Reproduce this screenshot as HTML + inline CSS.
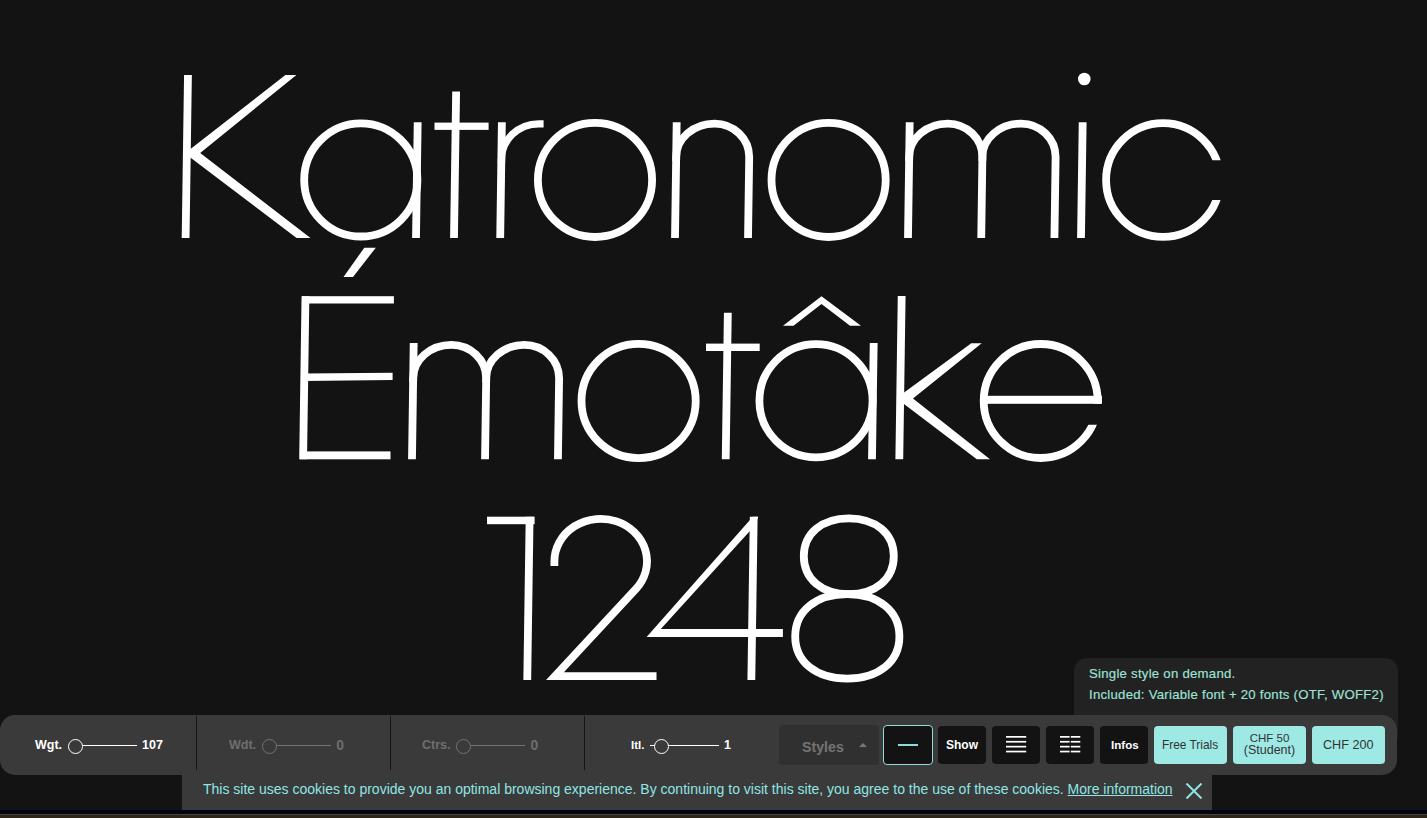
<!DOCTYPE html>
<html><head><meta charset="utf-8"><title>Katronomic</title>
<style>
html,body{margin:0;padding:0;}
body{width:1427px;height:818px;overflow:hidden;background:#131313;position:relative;font-family:"Liberation Sans",sans-serif;}
.big{position:absolute;left:0;top:0;}
.bar{position:absolute;left:0;top:715px;width:1397px;height:60px;background:#3a3a3a;border-radius:15px;}
.div{position:absolute;top:716px;width:1px;height:54px;background:#151515;}
.lbl{position:absolute;top:736.5px;font-size:12.5px;font-weight:bold;line-height:16px;white-space:nowrap;}
.val{position:absolute;top:736.5px;font-size:12.5px;font-weight:bold;line-height:16px;white-space:nowrap;}
.on{color:#fff;}
.off{color:#6e6e6e;}
.knob{position:absolute;top:738.6px;width:13px;height:13px;border-radius:50%;border:1.5px solid;box-sizing:content-box;}
.knob.on{border-color:#fff;} .knob.off{border-color:#737373;}
.line{position:absolute;top:745px;height:1.2px;}
.line.on{background:#fff;} .line.off{background:#737373;}
.btn{position:absolute;top:726px;height:38px;border-radius:4px;background:#131313;color:#fff;box-sizing:border-box;}
.teal{background:#9ee9e4;color:#333;}
.popup{position:absolute;left:1074px;top:658px;width:324px;height:90px;background:#222;border-radius:13px;}
.ptxt{position:absolute;left:1089px;color:#9fe3d8;font-size:13.2px;letter-spacing:0.25px;-webkit-text-stroke:0.15px #9fe3d8;white-space:nowrap;line-height:16px;}
.cookie{position:absolute;left:182px;top:775px;width:1030px;height:35px;background:#3a3a3a;}
.ctxt{position:absolute;left:203px;top:781px;font-size:14px;line-height:16px;color:#8fe6e4;white-space:nowrap;}
.navy{position:absolute;left:0;top:810px;width:1427px;height:4px;background:#020614;}
.brown{position:absolute;left:0;top:814px;width:1427px;height:4px;background:#2e2619;border-top:1px solid #4b4436;box-sizing:border-box;}
</style></head><body>
<svg class="big" width="1427" height="818" viewBox="0 0 1427 818"><defs><clipPath id="cc"><path d="M1090,100 H1240 V160.3 H1160 V200.1 H1240 V260 H1090Z"/></clipPath><clipPath id="ce"><path d="M970,320 H1120 V403.8 H1040 V424.8 H1120 V480 H970Z"/></clipPath><clipPath id="c4"><path d="M600,516.7 H758.3 L756,624 H800 V700 H600Z"/></clipPath></defs><g fill="#ffffff"><polygon points="181.7,238 189.5,238 191.86,75 184.06,75"/>
<polygon points="285.4,75 296.4,75 200.2,152.9 310.5,238 296.6,238 186,154.2 186,152.5"/>
<ellipse cx="360.8" cy="179.9" rx="56.6" ry="56.6" fill="none" stroke="#ffffff" stroke-width="7.8"/>
<polygon points="412.1,238 419.9,238 421.58,122.2 413.78,122.2"/>
<polygon points="450.1,238 457.9,238 460.03,91.4 452.23,91.4"/>
<rect x="434.5" y="122.6" width="54.1" height="7.3"/>
<polygon points="496.3,238 504.1,238 505.78,122.2 497.98,122.2"/>
<path d="M501.45,163 L501.5,159.3 A37.4,35.5 0 0 1 538.9,123.8 H543.6" fill="none" stroke="#ffffff" stroke-width="7.3"/>
<ellipse cx="595" cy="179.9" rx="57.1" ry="57.1" fill="none" stroke="#ffffff" stroke-width="7.8"/>
<polygon points="671.1,238 678.9,238 680.58,122.2 672.78,122.2"/>
<path d="M676.14,161 L676.2,157 A38.4,33.4 0 0 1 714.6,123.6 A34.6,33.4 0 0 1 749.2,157 L748.03,238" fill="none" stroke="#ffffff" stroke-width="7.8"/>
<ellipse cx="828.6" cy="179.9" rx="57.1" ry="57.1" fill="none" stroke="#ffffff" stroke-width="7.8"/>
<polygon points="904.1,238 911.9,238 913.58,122.2 905.78,122.2"/>
<path d="M909.14,161 L909.2,157 A38.6,33.4 0 0 1 947.8,123.6 A34.6,33.4 0 0 1 982.4,157 L981.23,238" fill="none" stroke="#ffffff" stroke-width="7.8"/>
<path d="M982.34,161 L982.4,157 A38.8,33.4 0 0 1 1021.2,123.6 A34.4,33.4 0 0 1 1055.6,157 L1054.43,238" fill="none" stroke="#ffffff" stroke-width="7.8"/>
<polygon points="1077.1,238 1084.9,238 1086.58,122.2 1078.78,122.2"/>
<circle cx="1084.3" cy="79" r="6.3"/>
<g clip-path="url(#cc)"><ellipse cx="1163" cy="179.95" rx="56.9" ry="56.9" fill="none" stroke="#ffffff" stroke-width="7.8"/></g>
<polygon points="299.2,459.3 307,459.3 309.36,296.2 301.56,296.2"/>
<rect x="302" y="296.2" width="91.9" height="7.3"/>
<polygon points="304,373.5 392.6,372.8 392.6,380 304,381"/>
<rect x="300" y="451.4" width="90.5" height="7.9"/>
<polygon points="343.5,277 353,277 375.8,247.7 364.3,247.7"/>
<polygon points="408.1,459.3 415.9,459.3 417.59,342.9 409.79,342.9"/>
<path d="M413.14,382.3 L413.2,378.3 A38.2,33.4 0 0 1 451.4,344.9 A34.8,33.4 0 0 1 486.2,378.3 L485.03,459.3" fill="none" stroke="#ffffff" stroke-width="7.8"/>
<path d="M486.14,382.3 L486.2,378.3 A38.3,33.4 0 0 1 524.5,344.9 A34.6,33.4 0 0 1 559.1,378.3 L557.93,459.3" fill="none" stroke="#ffffff" stroke-width="7.8"/>
<ellipse cx="638.6" cy="401" rx="57.1" ry="57.1" fill="none" stroke="#ffffff" stroke-width="7.8"/>
<polygon points="721.8,459.3 729.6,459.3 731.73,312.7 723.93,312.7"/>
<rect x="706" y="343.6" width="53.7" height="7.4"/>
<ellipse cx="816" cy="400.7" rx="56.6" ry="56.6" fill="none" stroke="#ffffff" stroke-width="7.8"/>
<polygon points="868.1,459.3 875.9,459.3 877.59,342.9 869.79,342.9"/>
<polygon points="783,325.7 821.5,296.2 861,325.7 850,325.7 821.5,304 793.5,325.7"/>
<polygon points="895.4,459.3 903.2,459.3 905.57,295.9 897.77,295.9"/>
<polygon points="971.3,343.3 981.7,343.3 913,398.5 990,459.3 976.8,459.3 900,401 900,395.5"/>
<g clip-path="url(#ce)"><ellipse cx="1040.7" cy="401" rx="57" ry="57" fill="none" stroke="#ffffff" stroke-width="7.8"/></g>
<rect x="984" y="395.8" width="117.9" height="8"/>
<polygon points="523.35,680 531.15,680 533.52,516.7 525.72,516.7"/>
<rect x="487" y="516.7" width="47.6" height="7.5"/>
<path d="M554.4,566 V561 A46.3,42.5 0 1 1 636.2,588.6 L555,676.1 H656.5" fill="none" stroke="#ffffff" stroke-width="7.8" stroke-linejoin="miter" stroke-miterlimit="6"/>
<polygon points="752.8,516.7 758.4,516.7 753.5,527 660.8,628.9 782.9,628.9 782.9,637 646.6,637"/>
<polygon points="747.45,680 755.25,680 757.62,516.7 749.82,516.7"/>
<path d="M893.8,556.3 C893.8,579.04 875.8,594.2 848.8,594.2 C821.8,594.2 803.8,579.04 803.8,556.3 C803.8,533.56 821.8,518.4 848.8,518.4 C875.8,518.4 893.8,533.56 893.8,556.3 Z" fill="none" stroke="#ffffff" stroke-width="7.8"/>
<path d="M899.4,636.4 C899.4,661.72 878.56,678.6 847.3,678.6 C816.04,678.6 795.2,661.72 795.2,636.4 C795.2,611.08 816.04,594.2 847.3,594.2 C878.56,594.2 899.4,611.08 899.4,636.4 Z" fill="none" stroke="#ffffff" stroke-width="7.8"/></g></svg>
<div class="popup"></div>
<div class="ptxt" style="top:666.2px;">Single style on demand.</div>
<div class="ptxt" style="top:687.2px;">Included: Variable font + 20 fonts (OTF, WOFF2)</div>
<div class="bar"></div>
<div class="div" style="left:196px"></div>
<div class="div" style="left:390px"></div>
<div class="div" style="left:584px"></div>

<div class="lbl on" style="left:35px">Wgt.</div>
<div class="knob on" style="left:67.8px"></div>
<div class="line on" style="left:83px;width:54px"></div>
<div class="val on" style="left:142px">107</div>

<div class="lbl off" style="left:229px">Wdt.</div>
<div class="knob off" style="left:261.8px"></div>
<div class="line off" style="left:277px;width:54px"></div>
<div class="val off" style="left:336.3px;font-size:13.8px;top:737.6px">0</div>

<div class="lbl off" style="left:422px">Ctrs.</div>
<div class="knob off" style="left:455.8px"></div>
<div class="line off" style="left:471px;width:54px"></div>
<div class="val off" style="left:530.4px;font-size:13.8px;top:737.6px">0</div>

<div class="lbl on" style="left:631px;font-size:11.5px;top:737px">Itl.</div>
<div class="line on" style="left:650px;width:69px"></div>
<div class="knob on" style="left:654px;background:#3a3a3a"></div>
<div class="val on" style="left:724px">1</div>

<div class="btn" style="left:779px;top:725px;width:100px;height:40px;background:#303030;"></div>
<div style="position:absolute;left:802px;top:739px;font-size:14.2px;font-weight:bold;color:#747474;line-height:16px;">Styles</div>
<svg style="position:absolute;left:859px;top:743px" width="8" height="4"><polygon points="0,4 8,4 4,0" fill="#777"/></svg>

<div class="btn" style="left:883px;top:725px;width:50px;height:40px;border:1.5px solid #8fdcd8;background:#131313;"></div>
<div style="position:absolute;left:898px;top:744px;width:20px;height:2px;background:#8fdcd8"></div>

<div class="btn" style="left:938px;width:48px;"></div>
<div style="position:absolute;left:946px;top:737px;font-size:12px;font-weight:bold;color:#fff;line-height:16px;">Show</div>

<div class="btn" style="left:992px;width:48px;"></div>
<svg style="position:absolute;left:1006px;top:736px" width="21" height="17"><g fill="#fff"><rect x="0" y="0" width="20.2" height="1.7"/><rect x="0" y="4.9" width="20.2" height="1.7"/><rect x="0" y="9.8" width="20.2" height="1.7"/><rect x="0" y="14.7" width="20.2" height="1.7"/></g></svg>

<div class="btn" style="left:1046px;width:48px;"></div>
<svg style="position:absolute;left:1060px;top:736px" width="21" height="17"><g fill="#fff"><rect x="0" y="0" width="9.6" height="1.7"/><rect x="0" y="4.9" width="9.6" height="1.7"/><rect x="0" y="9.8" width="9.6" height="1.7"/><rect x="0" y="14.7" width="9.6" height="1.7"/><rect x="10.8" y="0" width="9.5" height="1.7"/><rect x="10.8" y="4.9" width="9.5" height="1.7"/><rect x="10.8" y="9.8" width="9.5" height="1.7"/><rect x="10.8" y="14.7" width="9.5" height="1.7"/></g></svg>

<div class="btn" style="left:1100px;width:48px;"></div>
<div style="position:absolute;left:1111px;top:737px;font-size:11.6px;font-weight:bold;color:#fff;line-height:16px;">Infos</div>

<div class="btn teal" style="left:1154px;width:73px;"></div>
<div style="position:absolute;left:1162px;top:738px;font-size:11.9px;color:#333;line-height:14px;white-space:nowrap;">Free Trials</div>

<div class="btn teal" style="left:1233px;width:73px;"></div>
<div style="position:absolute;left:1233px;width:73px;text-align:center;top:732px;font-size:11.5px;color:#333;line-height:12px;white-space:nowrap;">CHF 50<br><span style="font-size:12.5px">(Student)</span></div>

<div class="btn teal" style="left:1312px;width:73px;"></div>
<div style="position:absolute;left:1323px;top:737.5px;font-size:12.6px;color:#333;line-height:14px;white-space:nowrap;">CHF 200</div>

<div class="cookie"></div>
<div class="ctxt">This site uses cookies to provide you an optimal browsing experience. By continuing to visit this site, you agree to the use of these cookies. <span style="text-decoration:underline">More information</span></div>
<svg style="position:absolute;left:1185px;top:783px" width="18" height="16"><path d="M1.5,0.5 L16.5,15.5 M16.5,0.5 L1.5,15.5" stroke="#8fe6e4" stroke-width="2"/></svg>
<div class="navy"></div>
<div class="brown"></div>
</body></html>
